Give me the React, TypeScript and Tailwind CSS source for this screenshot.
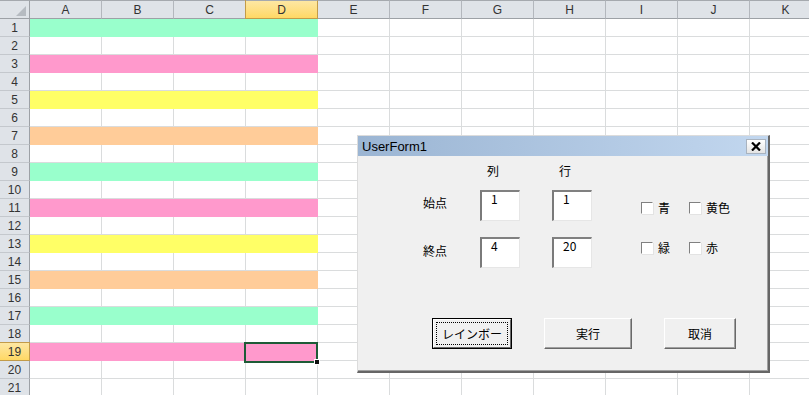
import React from 'react';

const COLS = ['A', 'B', 'C', 'D', 'E', 'F', 'G', 'H', 'I', 'J', 'K'];

const ROW_FILL: Record<number, string> = {
  1: 'bg-[#99ffcc] border-[#99ffcc]',
  3: 'bg-[#ff99cc] border-[#ff99cc]',
  5: 'bg-[#ffff66] border-[#ffff66]',
  7: 'bg-[#ffcc99] border-[#ffcc99]',
  9: 'bg-[#99ffcc] border-[#99ffcc]',
  11: 'bg-[#ff99cc] border-[#ff99cc]',
  13: 'bg-[#ffff66] border-[#ffff66]',
  15: 'bg-[#ffcc99] border-[#ffcc99]',
  17: 'bg-[#99ffcc] border-[#99ffcc]',
  19: 'bg-[#ff99cc] border-[#ff99cc]',
};

function HeaderRow() {
  return (
    <div className="flex h-[19px] shrink-0">
      <div className="relative w-[30px] shrink-0 h-[19px] border-t border-b border-r border-t-[#a5a9ae] border-b-[#9da1a6] border-r-[#9da1a6] bg-[#dfe3e8]">
        <svg className="absolute left-[16px] top-[5px]" width="10" height="10" viewBox="0 0 10 10">
          <polygon points="10,0 10,10 0,10" fill="#b6bbc1" />
        </svg>
      </div>
      {COLS.map((c) =>
        c === 'D' ? (
          <div
            key={c}
            className="w-[72px] shrink-0 h-[19px] flex items-center justify-center border-t border-b border-r border-t-[#a5a9ae] border-b-[#c29b49] border-r-[#c29b49] bg-gradient-to-b from-[#fde7a2] to-[#ffd863] shadow-[-1px_0_0_#c29b49] text-[12px] text-[#333] leading-none"
          >
            {c}
          </div>
        ) : (
          <div
            key={c}
            className="w-[72px] shrink-0 h-[19px] flex items-center justify-center border-t border-b border-r border-t-[#a5a9ae] border-b-[#9da1a6] border-r-[#b3b7bd] bg-[#dfe3e8] text-[12px] text-[#333] leading-none"
          >
            {c}
          </div>
        )
      )}
    </div>
  );
}

function Row({ n }: { n: number }) {
  const fill = ROW_FILL[n];
  const selected = n === 19;
  return (
    <div className="flex h-[18px] shrink-0">
      {selected ? (
        <div className="w-[30px] shrink-0 h-[18px] flex items-center justify-center border-b border-r border-[#c29b49] bg-gradient-to-b from-[#fde7a2] to-[#ffd863] shadow-[0_-1px_0_#c29b49] text-[12px] text-[#333] leading-none">
          {n}
        </div>
      ) : (
        <div className="w-[30px] shrink-0 h-[18px] flex items-center justify-center border-b border-r border-b-[#c4c8cd] border-r-[#9da1a6] bg-[#dfe3e8] text-[12px] text-[#333] leading-none">
          {n}
        </div>
      )}
      {COLS.map((c, i) => {
        const colored = fill && i < 4;
        const isSel = selected && c === 'D';
        return (
          <div
            key={c}
            className={
              'relative w-[72px] shrink-0 h-[18px] border-r border-b ' +
              (colored ? fill : 'bg-white border-[#dadcdd]')
            }
          >
            {isSel && (
              <div className="absolute left-[-2px] top-[-1px] w-[74px] h-[21px] border-2 border-[#1e5b37] z-10">
                <div className="absolute right-[-4px] bottom-[-4px] w-[6px] h-[6px] bg-[#111] border border-white" />
              </div>
            )}
          </div>
        );
      })}
    </div>
  );
}

function TextBox({ value }: { value: string }) {
  return (
    <div className="w-[40px] h-[31px] shrink-0 bg-white border-t-2 border-l-2 border-t-[#808080] border-l-[#7a7a7a] border-r border-b border-r-[#e6e6e6] border-b-[#e6e6e6] pl-[9px] text-[12px] leading-[13px] text-black">
      {value}
    </div>
  );
}

function CheckBox({ label, w }: { label: string; w: string }) {
  return (
    <div className={'flex items-center shrink-0 ' + w}>
      <div className="w-[12px] h-[12px] bg-white border-t border-l border-[#808080] border-r border-b border-r-[#ffffff] border-b-[#ffffff] shadow-[1px_1px_0_#e3e3e3]" />
      <span className="ml-[5px] text-[12px] leading-[12px] text-black">{label}</span>
    </div>
  );
}

function Btn({ label, w, def }: { label: string; w: string; def?: boolean }) {
  if (def) {
    return (
      <div className={'h-[31px] shrink-0 border border-black ' + w}>
        <div className="w-full h-full border border-t-white border-l-white border-r-[#696969] border-b-[#696969] bg-[#f0f0f0] p-[2px]">
          <div className="w-full h-full border border-dotted border-black flex items-center justify-center text-[12px] text-black leading-none">
            {label}
          </div>
        </div>
      </div>
    );
  }
  return (
    <div className={'h-[31px] shrink-0 border border-t-white border-l-white border-r-[#696969] border-b-[#696969] bg-[#f0f0f0] shadow-[inset_-1px_-1px_0_#a0a0a0] flex items-center justify-center text-[12px] text-black leading-none ' + w}>
      {label}
    </div>
  );
}

function UserForm() {
  return (
    <div className="absolute left-[357px] top-[135px] w-[413px] h-[238px] bg-[#f0f0f0] border-l border-t border-l-[#dcdcdc] border-t-[#dcdcdc] border-r-2 border-b-2 border-r-[#666666] border-b-[#666666] shadow-[inset_-1px_-1px_0_#a0a0a0] flex flex-col font-['Noto_Sans_CJK_JP','Liberation_Sans',sans-serif]">
      <div className="h-[20px] shrink-0 flex items-center justify-between bg-gradient-to-r from-[#9bb5d3] to-[#c2d7ef] pl-[4px] pr-[2px]">
        <span className="font-['Liberation_Sans',sans-serif] text-[13px] leading-none text-black">UserForm1</span>
        <div className="w-[20px] h-[15px] flex items-center justify-center border border-[#a9b3bf] bg-gradient-to-b from-[#ffffff] to-[#e4e4e4]">
          <svg width="10" height="9" viewBox="0 0 10 9">
            <path d="M1 0.5 L9 8.5 M9 0.5 L1 8.5" stroke="#000" strokeWidth="2.2" />
          </svg>
        </div>
      </div>
      <div className="flex flex-col">
        <div className="flex h-[34px] pt-[8px] pl-[129px] text-[12px] leading-[14px] text-black">
          <span className="w-[12px]">列</span>
          <span className="ml-[60px] w-[12px]">行</span>
        </div>
        <div className="flex items-start h-[31px]">
          <span className="ml-[65px] mt-[6px] w-[24px] text-[12px] leading-[14px]">始点</span>
          <div className="ml-[33px]">
            <TextBox value="1" />
          </div>
          <div className="ml-[32px]">
            <TextBox value="1" />
          </div>
          <div className="ml-[49px] mt-[12px] flex">
            <CheckBox label="青" w="w-[48px]" />
            <CheckBox label="黄色" w="w-[48px]" />
          </div>
        </div>
        <div className="flex items-start h-[31px] mt-[16px]">
          <span className="ml-[65px] mt-[7px] w-[24px] text-[12px] leading-[14px]">終点</span>
          <div className="ml-[33px]">
            <TextBox value="4" />
          </div>
          <div className="ml-[32px]">
            <TextBox value="20" />
          </div>
          <div className="ml-[49px] mt-[5px] flex">
            <CheckBox label="緑" w="w-[48px]" />
            <CheckBox label="赤" w="w-[48px]" />
          </div>
        </div>
        <div className="flex mt-[50px] pl-[74px] gap-[32px]">
          <Btn label="レインボー" w="w-[80px]" def />
          <Btn label="実行" w="w-[88px]" />
          <Btn label="取消" w="w-[72px]" />
        </div>
      </div>
    </div>
  );
}

export default function App() {
  const rows = Array.from({ length: 21 }, (_, i) => i + 1);
  return (
    <div className="relative w-[809px] h-[395px] overflow-hidden bg-white font-['Liberation_Sans','Noto_Sans_CJK_JP',sans-serif]">
      <div className="flex flex-col">
        <HeaderRow />
        {rows.map((n) => (
          <Row key={n} n={n} />
        ))}
      </div>
      <UserForm />
    </div>
  );
}
